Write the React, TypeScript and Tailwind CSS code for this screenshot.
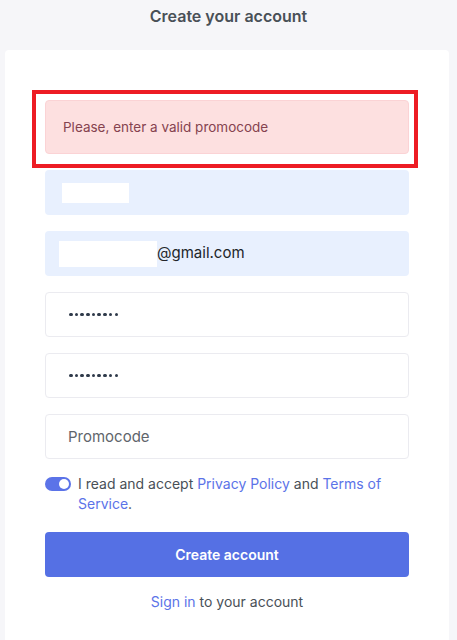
import { useState } from 'react';

function Dots() {
  return (
    <div className="flex gap-[2.2px]">
      {Array.from({ length: 9 }).map((_, i) => (
        <span key={i} className="h-[3.5px] w-[3.5px] rounded-full bg-[#2f3a4a]" />
      ))}
    </div>
  );
}

export default function App() {
  const [agree, setAgree] = useState(true);

  return (
    <div
      className="min-h-screen bg-[#f6f6f9] text-[#495057]"
      style={{ fontFamily: 'Inter, "Open Sans", sans-serif' }}
    >
      {/* 标题 */}
      <div className="h-[50px] pt-[4px] text-center">
        <h2 className="text-[16px] leading-[24px] font-semibold text-[#495057]">Create your account</h2>
      </div>

      {/* 表单卡片 */}
      <div className="mx-[5px] w-[444px] rounded-[4px] bg-white px-[40px] pt-[50px] pb-[40px]">
        <div className="relative">
          <div className="flex h-[54px] items-center rounded-[4px] border border-[#fbd3d5] bg-[#fde0e0] px-[17px] text-[13.5px] text-[#85434f]">
            Please, enter a valid promocode
          </div>
          <div className="pointer-events-none absolute -top-[10px] -right-[9px] -bottom-[14px] -left-[13px] border-4 border-[#ed1c24]" />
        </div>

        <div className="mt-[16px] flex flex-col gap-[16px]">
          <div className="flex h-[45px] items-center rounded-[4px] bg-[#e8f0fe] pl-[17px]">
            <div className="h-[20px] w-[67px] bg-white" />
          </div>
          <div className="flex h-[45px] items-center rounded-[4px] bg-[#e8f0fe] pl-[14px] text-[15px] text-[#212529]">
            <div className="h-[26px] w-[98px] bg-white" />
            <span>@gmail.com</span>
          </div>
          <div className="flex h-[45px] items-center rounded-[4px] border border-[#ebebf0] pl-[23px]">
            <Dots />
          </div>
          <div className="flex h-[45px] items-center rounded-[4px] border border-[#ebebf0] pl-[23px]">
            <Dots />
          </div>
          <input
            placeholder="Promocode"
            className="h-[45px] rounded-[4px] border border-[#ebebf0] pl-[22px] text-[15px] text-[#495057] outline-none placeholder:text-[#5f656b]"
          />
        </div>

        <div className="mt-[15px] flex items-start gap-[7px] text-[14px] leading-[20px] text-[#495057]">
          <button
            onClick={() => setAgree(!agree)}
            className={`mt-[3px] flex h-[14px] w-[26px] shrink-0 items-center rounded-full px-[2px] ${agree ? 'justify-end bg-[#5b73e8]' : 'justify-start bg-gray-300'}`}
          >
            <span className="h-[10px] w-[10px] rounded-full bg-white" />
          </button>
          <p>
            I read and accept <a className="text-[#5b73e8]">Privacy Policy</a> and{' '}
            <a className="text-[#5b73e8]">Terms of Service</a>.
          </p>
        </div>

        <button className="mt-[18px] h-[45px] w-full rounded-[4px] bg-[#5570e4] text-[14px] font-semibold text-white">
          Create account
        </button>

        <p className="mt-[15px] text-center text-[14px] leading-[20px] text-[#495057]">
          <a className="text-[#5b73e8]">Sign in</a> to your account
        </p>
      </div>
    </div>
  );
}
